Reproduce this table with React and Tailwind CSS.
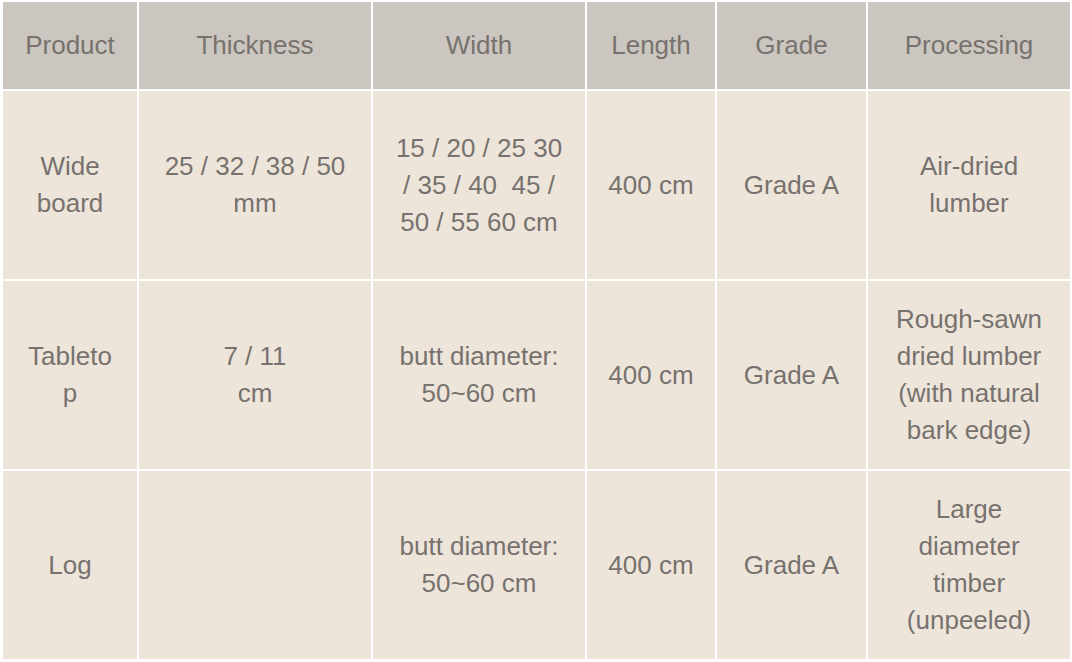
import React from 'react';

const headers = ['Product', 'Thickness', 'Width', 'Length', 'Grade', 'Processing'];

const rows = [
  [
    'Wide board',
    '25 / 32 / 38 / 50 mm',
    '15 / 20 / 25 30 / 35 / 40\u00a0 45 / 50 / 55 60 cm',
    '400 cm',
    'Grade A',
    'Air-dried lumber',
  ],
  [
    'Tabletop',
    <>7 / 11<br />cm</>,
    'butt diameter: 50~60 cm',
    '400 cm',
    'Grade A',
    'Rough-sawn dried lumber (with natural bark edge)',
  ],
  [
    'Log',
    '',
    'butt diameter: 50~60 cm',
    '400 cm',
    'Grade A',
    'Large diameter timber (unpeeled)',
  ],
];

const App = () => {
  return (
    <div
      className="w-[1072px] h-[662px] bg-white pt-[2px] pl-[3px] text-[#77726e] text-[26px] leading-[37px]"
      style={{ fontFamily: '"Liberation Sans", Arial, sans-serif' }}
    >
      <div className="grid grid-cols-[134px_232px_212px_128px_149px_202px] grid-rows-[87px_188px_188px_188px] gap-[2px]">
        {headers.map((h) => (
          <div key={h} className="bg-[#cbc6bf] flex items-center justify-center text-center px-5">
            {h}
          </div>
        ))}
        {rows.map((row, i) =>
          row.map((cell, j) => (
            <div
              key={`${i}-${j}`}
              className="bg-[#ede5da] flex items-center justify-center text-center px-5 break-words min-w-0"
            >
              <div className="w-full break-words">{cell}</div>
            </div>
          ))
        )}
      </div>
    </div>
  );
};

export default App;
